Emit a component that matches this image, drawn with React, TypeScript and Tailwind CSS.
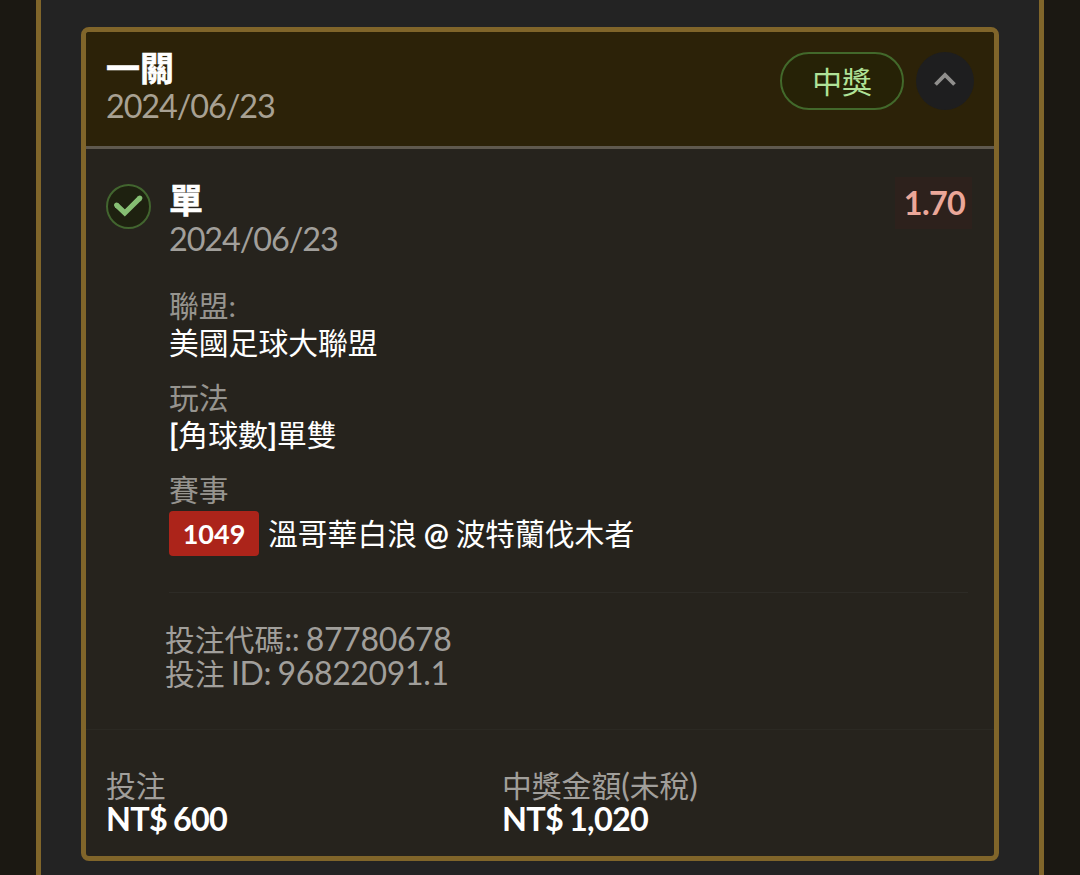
import React from "react";

type FieldProps = {
  label: string
  children: React.ReactNode
}

function Field({ label, children }: FieldProps) {
  return (
    <div className="mb-[18px]">
      <div className="h-[37px] leading-[38px] text-[#96948f]">{label}</div>
      <div className="h-[37px] text-white">{children}</div>
    </div>
  )
}

function Num({ children }: { children: React.ReactNode }) {
  return <span className="text-[32px] leading-none tracking-[-0.35px] [word-spacing:-1.5px]">{children}</span>
}

function StatusIcon() {
  return (
    <div className="mt-[3px] size-[45px] shrink-0 rounded-full border-2 border-[#42652f] bg-[#1e2110]">
      <svg viewBox="0 0 41 41" className="size-[41px]" fill="none">
        <path
          d="M8.6 19.2 L16.8 27 L31.8 12.2"
          stroke="#86bf73"
          strokeWidth="5.2"
        />
        <path
          d="M8.6 19.2 L9 19.6 M31.4 12.6 L31.8 12.2"
          stroke="#86bf73"
          strokeWidth="5.2"
          strokeLinecap="round"
        />
      </svg>
    </div>
  )
}

function CardHeader() {
  return (
    <div className="flex h-[117px] justify-between border-b-[3px] border-[#5f594e] bg-[#2c2208] pt-4 pr-5 pl-5">
      <div>
        <div className="h-[39px] text-[34px] leading-[39px] font-bold text-white [-webkit-text-stroke:0.6px_white]">一關</div>
        <div className="h-[37px] text-[32.4px] tracking-[-1.1px] text-[#a8a193]">2024/06/23</div>
      </div>
      <div className="mt-1 flex gap-3">
        <div className="flex h-[58px] w-[124px] items-center justify-center rounded-full border-2 border-[#42692b] bg-[#262206] text-[#b0e298]">
          中獎
        </div>
        <button className="flex size-[58px] items-center justify-center rounded-full bg-[#1e1e1f]">
          <svg viewBox="0 0 24 16" className="mb-1 h-4 w-6" fill="none">
            <path d="M2.5 13.5 L12 4 L21.5 13.5" stroke="#908f8d" strokeWidth="3.8" />
          </svg>
        </button>
      </div>
    </div>
  )
}

function BetDetail() {
  return (
    <div className="flex h-[581px] gap-[18px] border-b border-[#2b2923] pt-8 pr-[26px] pl-5">
      <StatusIcon />
      <div className="flex-1">
        <div className="flex h-[106px] justify-between">
          <div>
            <div className="h-[39px] text-[34px] leading-[38px] font-bold text-white [-webkit-text-stroke:0.6px_white]">單</div>
            <div className="h-[37px] text-[32.4px] tracking-[-1.1px] text-[#a19f9b]">2024/06/23</div>
          </div>
          <div className="-mt-1 -mr-1 h-[52px] w-[77px] bg-[#2d211c] pl-[2px] text-center text-[32.4px] leading-[52px] font-bold tracking-[-0.7px] text-[#eba799]">
            1.70
          </div>
        </div>

        <Field label="聯盟:">美國足球大聯盟</Field>
        <Field label="玩法">
          <b>[</b>角球數<b>]</b>單雙
        </Field>
        <div className="h-[37px] leading-[38px] text-[#96948f]">賽事</div>
        <div className="mt-[3px] flex h-[45px] items-center gap-[9px] text-white">
          <span className="h-[45px] w-[90px] rounded-[4px] bg-[#ac241a] text-center text-[27px] leading-[45px] font-bold">
            1049
          </span>
          <span className="leading-[45px] [word-spacing:-1px]">溫哥華白浪 <b>@</b> 波特蘭伐木者</span>
        </div>

        <div className="mt-9 h-px bg-[#2d2b26]" />

        <div className="mt-[29px] -ml-1 leading-[35px] text-[#a19f9b]">
          <div className="h-[34px]">投注代碼<Num>:: 87780678</Num></div>
          <div className="h-[34px]">投注<Num> ID: 96822091.1</Num></div>
        </div>
      </div>
    </div>
  )
}

function CardFooter() {
  return (
    <div className="grid flex-1 grid-cols-[396px_1fr] pt-[38px] pl-5 leading-[34px]">
      <div>
        <div className="h-[34px] leading-[36px] text-[#a19f9b]">投注</div>
        <div className="h-[34px] text-[32.4px] leading-[33px] font-bold tracking-[-0.75px] [word-spacing:-1px] text-white">NT$ 600</div>
      </div>
      <div>
        <div className="h-[34px] leading-[36px] text-[#a19f9b]">
          中獎金額<span className="text-[32px] leading-none">(</span>未稅<span className="text-[32px] leading-none">)</span>
        </div>
        <div className="h-[34px] text-[32.4px] leading-[33px] font-bold tracking-[-0.75px] [word-spacing:-1px] text-white">NT$ 1,020</div>
      </div>
    </div>
  )
}

export default function App() {
  return (
    <div
      lang="zh-Hant"
      className="h-[875px] w-[1080px] overflow-hidden bg-[#1b1812] px-9 font-[Lato,'Noto_Sans_CJK_TC',sans-serif] text-[29.8px] leading-[37px]"
    >
      <div className="h-full border-x-[5px] border-[#80652a] bg-[#232323] px-10 pt-[27px]">
        <div className="flex h-[834px] flex-col overflow-hidden rounded-[8px] border-[5px] border-[#80652a] bg-[#26231d]">
          <CardHeader />
          <BetDetail />
          <CardFooter />
        </div>
      </div>
    </div>
  )
}
